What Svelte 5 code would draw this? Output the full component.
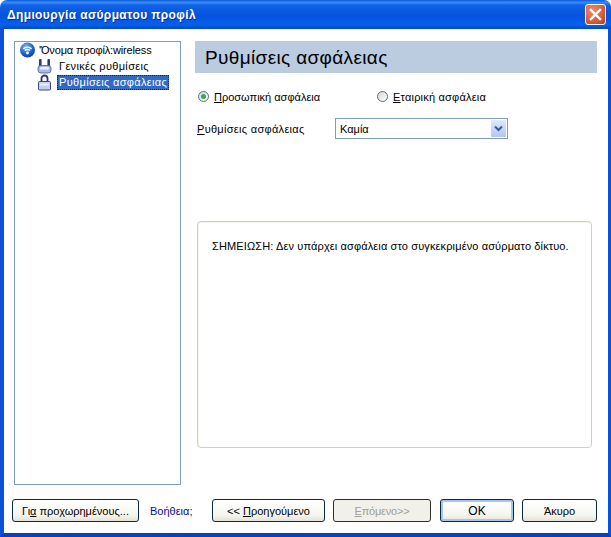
<script lang="ts">
  const note = "ΣΗΜΕΙΩΣΗ: Δεν υπάρχει ασφάλεια στο συγκεκριμένο ασύρματο δίκτυο.";
</script>

<div class="window">
  <header class="titlebar">
    <span class="title">Δημιουργία ασύρματου προφίλ</span>
    <button class="close" type="button" aria-label="Κλείσιμο">
      <svg width="13" height="13" viewBox="0 0 13 13">
        <path d="M2 2 L11 11 M11 2 L2 11" stroke="#fff" stroke-width="2.4" stroke-linecap="square" />
      </svg>
    </button>
  </header>

  <div class="client">
    <div class="main">
      <nav class="tree">
        <div class="node root">
          <svg class="icon" width="16" height="16" viewBox="0 0 16 16">
            <defs>
              <radialGradient id="globe" cx="0.4" cy="0.3" r="0.8">
                <stop offset="0" stop-color="#7db8f5" />
                <stop offset="0.6" stop-color="#1a5fc8" />
                <stop offset="1" stop-color="#0c3a8c" />
              </radialGradient>
            </defs>
            <circle cx="7.5" cy="8" r="7.5" fill="url(#globe)" />
            <path d="M3.3 6.8 A6 6 0 0 1 11.7 6.8 M4.9 8.6 A3.6 3.6 0 0 1 10.1 8.6" fill="none" stroke="#fff" stroke-width="1.4" />
            <circle cx="7.5" cy="11" r="1.4" fill="#fff" />
          </svg>
          <span class="root-label">'Όνομα προφίλ:wireless</span>
        </div>
        <div class="node child">
          <svg class="icon" width="15" height="16" viewBox="0 0 15 16">
            <rect x="2" y="1" width="2.6" height="8" rx="1" fill="#2b3a78" />
            <rect x="10.4" y="1" width="2.6" height="8" rx="1" fill="#2b3a78" />
            <path d="M1 10 Q1 7.5 4 7.5 H11 Q14 7.5 14 10 V12 Q14 15 11 15 H4 Q1 15 1 12 Z" fill="#aab8e8" stroke="#4a5aa0" stroke-width="0.8" />
            <rect x="3" y="9" width="9" height="2.4" rx="1" fill="#eef1fc" />
          </svg>
          <span class="label">Γενικές ρυθμίσεις</span>
        </div>
        <div class="node child">
          <svg class="icon" width="15" height="17" viewBox="0 0 15 17">
            <path d="M4.5 8 V4.5 A3 3 0 0 1 10.5 4.5 V8" fill="none" stroke="#2b3a78" stroke-width="1.8" />
            <rect x="1.5" y="7.5" width="12" height="8.5" rx="1" fill="#c3cdec" stroke="#3a4a8c" />
            <rect x="3" y="9.5" width="9" height="2" fill="#eef1fb" />
          </svg>
          <span class="label selected">Ρυθμίσεις ασφάλειας</span>
        </div>
      </nav>

      <section class="panel">
        <h1 class="heading">Ρυθμίσεις ασφάλειας</h1>

        <div class="radios">
          <span class="radio first"><i class="dot on"></i><span><u>Π</u>ροσωπική ασφάλεια</span></span>
          <span class="radio"><i class="dot"></i><span><u>Ε</u>ταιρική ασφάλεια</span></span>
        </div>

        <div class="field">
          <span class="field-label"><u>Ρ</u>υθμίσεις ασφάλειας</span>
          <div class="select">
            <span>Καμία</span>
            <span class="arrow">
              <svg width="9" height="7" viewBox="0 0 9 7">
                <path d="M1 1.5 L4.5 5 L8 1.5" fill="none" stroke="#3b5a9a" stroke-width="2" />
              </svg>
            </span>
          </div>
        </div>

        <div class="note">{note}</div>
      </section>
    </div>

    <footer class="buttons">
      <button class="btn advanced" type="button">Γι<u>α</u> προχωρημένους...</button>
      <span class="help">Βοήθεια;</span>
      <button class="btn prev" type="button">&lt;&lt; <u>Π</u>ροηγούμενο</button>
      <button class="btn next" type="button" disabled><u>Ε</u>πόμενο&gt;&gt;</button>
      <button class="btn ok" type="button">ΟΚ</button>
      <button class="btn cancel" type="button">Άκυρο</button>
    </footer>
  </div>
</div>

<style>
  :global(body) {
    margin: 0;
    background: #fff;
  }

  .window {
    width: 611px;
    height: 537px;
    display: flex;
    flex-direction: column;
    font-family: "Liberation Sans", "Noto Sans", sans-serif;
    font-size: 11px;
    color: #000;
    overflow: hidden;
  }

  .titlebar {
    height: 29px;
    flex: none;
    display: flex;
    align-items: center;
    justify-content: space-between;
    padding: 0 5px 0 7px;
    border-radius: 7px 7px 0 0;
    background: linear-gradient(180deg, #0a58d8 0%, #3a8cf6 8%, #0f62e6 18%, #0453dd 55%, #0560ee 85%, #0346c8 100%);
  }

  .title {
    color: #fff;
    font-weight: bold;
    font-size: 12px;
    letter-spacing: 0.37px;
    text-shadow: 1px 1px 0 #0a2f8c;
  }

  .close {
    width: 21px;
    height: 21px;
    padding: 0;
    display: flex;
    align-items: center;
    justify-content: center;
    border: 1px solid #fff;
    border-radius: 3px;
    background: radial-gradient(circle at 35% 30%, #ee8a6c, #dc5a36 60%, #b8381c);
  }

  .client {
    flex: 1;
    min-height: 0;
    display: flex;
    flex-direction: column;
    background: #fff;
    border-left: 4px solid #0a50d8;
    border-right: 3px solid #0a50d8;
    border-bottom: 4px solid #0a3fc0;
  }

  .main {
    display: flex;
    gap: 14px;
    padding: 12px 11px 0 10px;
  }

  .tree {
    width: 160px;
    height: 442px;
    flex: none;
    border: 1px solid #7f9db9;
    padding: 0 0 0 5px;
  }

  .node {
    display: flex;
    align-items: center;
    height: 16px;
    white-space: nowrap;
  }

  .icon {
    flex: none;
  }

  .root-label {
    margin-left: 3px;
    letter-spacing: -0.15px;
  }

  .child {
    padding-left: 17px;
  }

  .label {
    margin-left: 5px;
    padding: 0 2px;
    line-height: 15px;
    letter-spacing: 0.33px;
  }

  .selected {
    width: 108px;
    background: #316ac5;
    color: #fff;
    outline: 1px dotted #10204a;
    outline-offset: -1px;
  }

  .panel {
    flex: 1;
    min-width: 0;
  }

  .heading {
    margin: 0;
    height: 32px;
    line-height: 33px;
    padding-left: 10px;
    background: #bbcbe0;
    font-size: 19px;
    font-weight: normal;
    letter-spacing: 0.35px;
  }

  .radios {
    display: flex;
    align-items: center;
    margin-top: 17px;
    padding-left: 3px;
    height: 13px;
  }

  .radio {
    display: flex;
    align-items: center;
    gap: 5px;
    white-space: nowrap;
  }

  .radio.first {
    width: 179px;
  }

  .radio + .radio {
    letter-spacing: 0.2px;
  }

  .dot {
    width: 11px;
    height: 11px;
    border: 1px solid #4a6f98;
    border-radius: 50%;
    background: linear-gradient(135deg, #d8d8d0, #fff);
    display: flex;
    align-items: center;
    justify-content: center;
    box-sizing: border-box;
    flex: none;
  }

  .dot.on::after {
    content: "";
    width: 5px;
    height: 5px;
    border-radius: 50%;
    background: #3fa84a;
  }

  .field {
    display: flex;
    align-items: center;
    margin-top: 15px;
    padding-left: 2px;
  }

  .field-label {
    width: 138px;
    flex: none;
    letter-spacing: 0.3px;
  }

  .select {
    width: 173px;
    height: 21px;
    box-sizing: border-box;
    border: 1px solid #7f9db9;
    display: flex;
    align-items: center;
    justify-content: space-between;
    padding: 1px 1px 1px 4px;
  }

  .arrow {
    width: 15px;
    height: 17px;
    display: flex;
    align-items: center;
    justify-content: center;
    background: linear-gradient(180deg, #e0e8fc, #b4c6f0);
    border-radius: 1px;
  }

  .note {
    margin: 82px 5px 0 2px;
    height: 227px;
    box-sizing: border-box;
    border: 1px solid #d0d0bf;
    border-radius: 4px;
    padding: 18px 0 0 14px;
    box-shadow: inset 1px 1px 0 #f4f4ee;
    letter-spacing: 0.125px;
  }

  .buttons {
    display: flex;
    align-items: center;
    margin-top: 14px;
    padding-left: 8px;
  }

  .btn {
    height: 23px;
    padding: 0;
    font: inherit;
    color: #000;
    border: 1px solid #10263e;
    border-radius: 3px;
    background: linear-gradient(180deg, #fff 0%, #f6f6f0 70%, #e4e2d8 100%);
    white-space: nowrap;
    flex: none;
  }

  .btn:disabled {
    color: #a2a08f;
    border-color: #2f2f28;
    background: #f1f0ea;
    letter-spacing: -0.2px;
  }

  .advanced {
    width: 127px;
  }

  .help {
    margin-left: 11px;
    width: 62px;
    color: #0a0a8c;
  }

  .prev {
    width: 113px;
  }

  .next {
    width: 98px;
    margin-left: 8px;
  }

  .ok {
    width: 74px;
    margin-left: 9px;
    font-size: 12px;
    box-shadow: inset 0 0 0 2px #a9c4ee;
  }

  .cancel {
    width: 75px;
    margin-left: 8px;
  }
</style>
